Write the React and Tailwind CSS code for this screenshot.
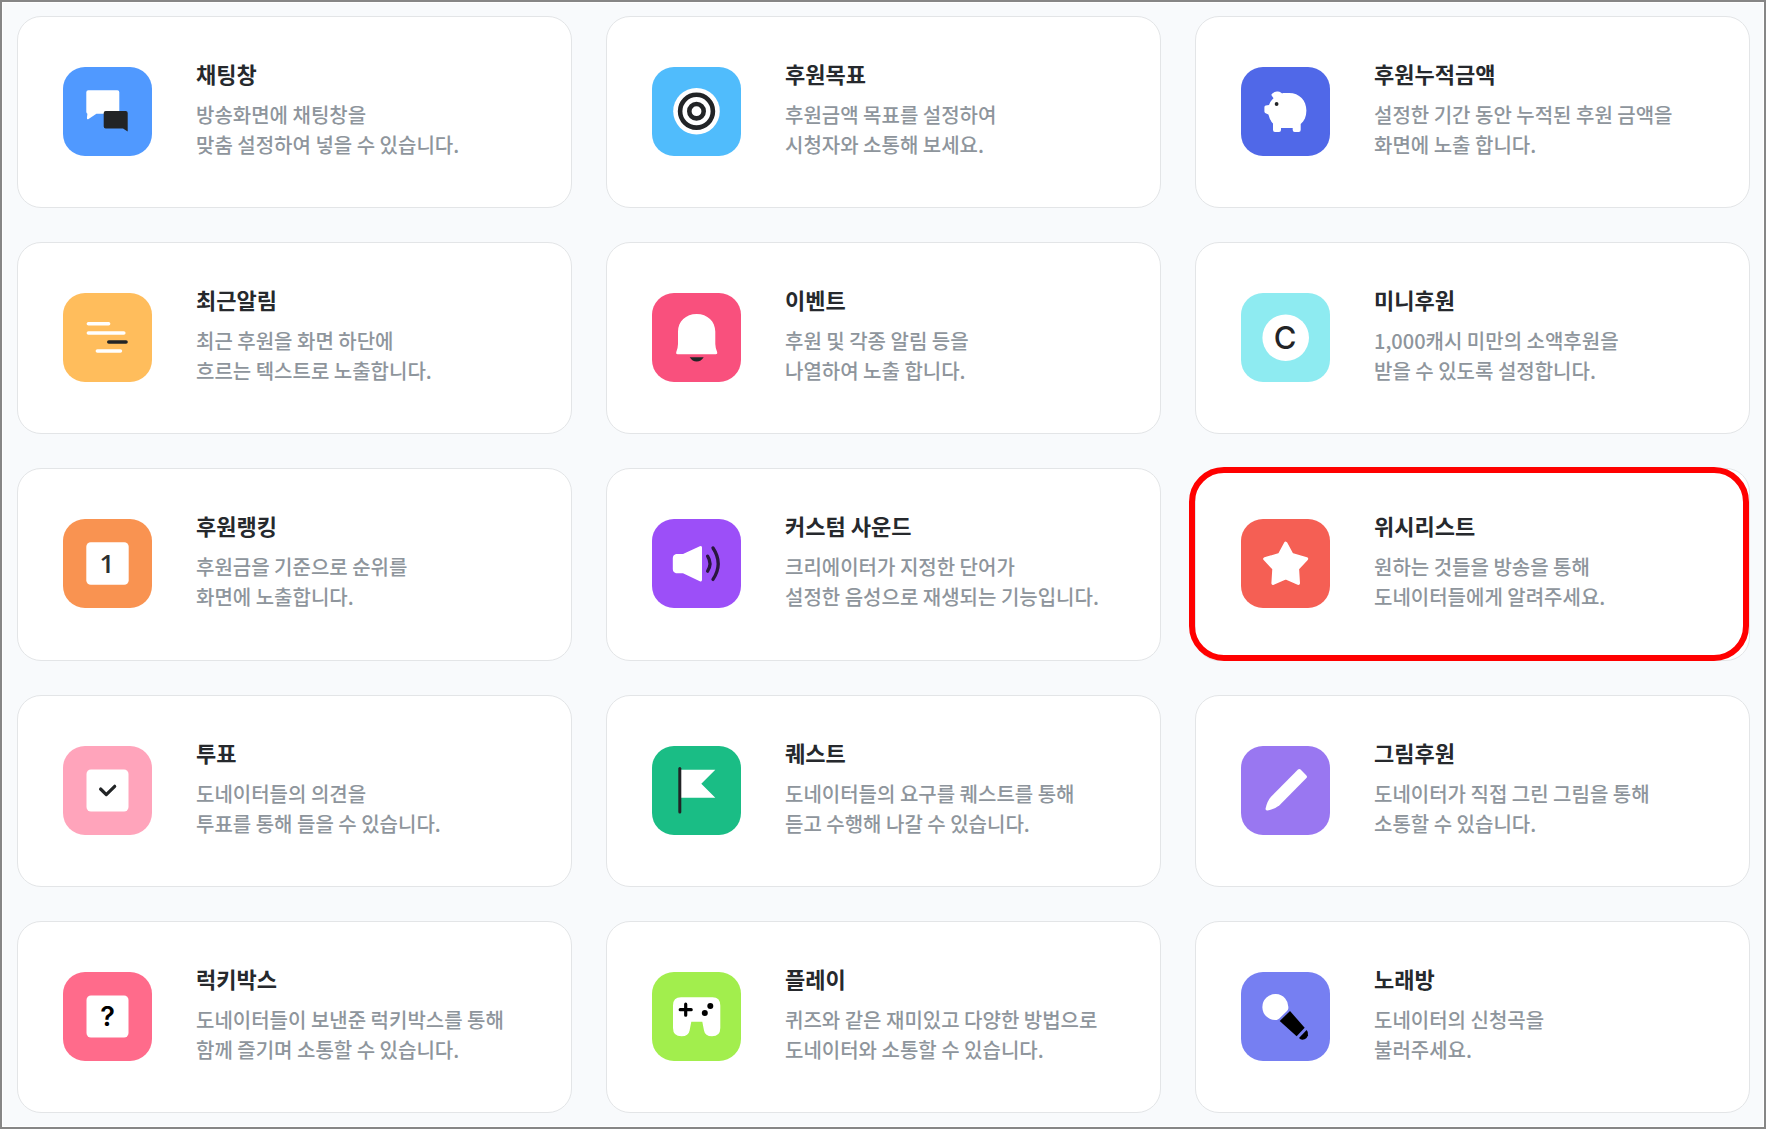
import React from 'react';

const ink = '#222426';

const ChatIcon = () => (
  <>
    <path d="M25.3 23.3H54.3Q56.3 23.3 56.3 25.3V46.7H33.4L25.2 52.2Q23.8 52.6 23.9 51L24.4 46.7Q23.3 46 23.3 44.7V25.3Q23.3 23.3 25.3 23.3Z" fill="#fff" />
    <path d="M42.7 44H62.7Q64.7 44 64.7 46V64.6L60 61.5H42.7Q40.7 61.5 40.7 59.5V46Q40.7 44 42.7 44Z" fill={ink} />
  </>
);

const TargetIcon = () => (
  <>
    <circle cx="44.5" cy="44.2" r="23.3" fill="#fff" />
    <circle cx="44.5" cy="44.2" r="16.4" fill="none" stroke={ink} strokeWidth="4.6" />
    <circle cx="44.5" cy="44.2" r="7.2" fill="none" stroke={ink} strokeWidth="4.6" />
  </>
);

const PiggyIcon = () => (
  <>
    <g fill="#fff">
      <path d="M42 26H48C58.5 26 65.4 33.5 65.4 43.5C65.4 49.5 63.3 54 59.7 57V63Q59.7 65 57.7 65H53.7Q51.7 65 51.7 63V61H40V63Q40 65 38 65H34Q32 65 32 63V56.5Q28.6 53 27.4 47.5L24.6 46.2Q23.4 45.6 23.4 44.4V40.2Q23.4 38.8 24.8 38.5L28 38Q29 34.5 32.5 31.3Z" />
      <path d="M30.6 28.4Q30 27.2 31.4 26.6Q33.8 24.2 36.8 24.6Q40.5 25 41.5 27.5L33.5 32.5Z" />
    </g>
    <circle cx="35.6" cy="37" r="1.9" fill={ink} />
  </>
);

const TickerIcon = () => (
  <g strokeWidth="3.6" strokeLinecap="round" stroke="#fff">
    <path d="M25.4 30.7H45.6M25.4 40H60.8M34.4 58H57.4" />
    <path d="M45.8 49H63" stroke={ink} />
  </g>
);

const BellIcon = () => (
  <>
    <path d="M44.7 21C55.5 21 63.3 28.5 63.3 38.5V51Q63.3 54.5 65.2 59.2Q65.8 61.3 63.8 61.3H25.6Q23.6 61.3 24.2 59.2Q26 54.5 26 51V38.5C26 28.5 33.8 21 44.7 21Z" fill="#fff" />
    <path d="M37.7 64.2H51.7Q49.2 68.4 44.7 68.4Q40.2 68.4 37.7 64.2Z" fill={ink} />
  </>
);

const CoinIcon = () => (
  <>
    <circle cx="44.7" cy="44.7" r="23.3" fill="#fff" />
    <text x="44" y="55.8" textAnchor="middle" className="font-['Inter'] text-[31px] font-medium" fill={ink}>C</text>
  </>
);

const RankIcon = () => (
  <>
    <rect x="23.3" y="23.3" width="42.4" height="42.4" rx="4.5" fill="#fff" />
    <text x="44" y="54" textAnchor="middle" className="font-['Open_Sans'] text-[26px] font-semibold" fill="#2c2f30">1</text>
  </>
);

const SoundIcon = () => (
  <>
    <path d="M24 35H31L47.8 27.2Q50 26.2 50 28.5V60.8Q50 63.2 47.8 62.2L31 54.3H24Q20.8 53.2 20.8 50V39.2Q20.8 36 24 35Z" fill="#fff" />
    <path d="M55.6 37.2Q60.4 44.7 55.6 52.2M61 29Q71.4 44.7 61 60.4" fill="none" stroke="#2a1740" strokeWidth="3.3" strokeLinecap="round" />
  </>
);

const StarIcon = () => (
  <path
    d="M44.7 24.4L50.9 35.7L65.5 39.9L56.4 49.6L57.3 64.2L44.7 58.6L32.1 64.2L33 49.6L23.9 39.9L38.5 35.7Z"
    fill="#fff"
    stroke="#fff"
    strokeWidth="3.4"
    strokeLinejoin="round"
  />
);

const VoteIcon = () => (
  <>
    <rect x="23.5" y="23.5" width="42" height="42" rx="4.5" fill="#fff" />
    <path d="M37.6 43L43.3 48.6L51.7 40.3" fill="none" stroke={ink} strokeWidth="3.2" strokeLinecap="round" strokeLinejoin="round" />
  </>
);

const FlagIcon = () => (
  <>
    <path d="M29 23.7H63.3L49.3 37.7L63.3 51.7H29Z" fill="#fff" />
    <path d="M27.8 22.6V66" stroke={ink} strokeWidth="3" strokeLinecap="round" />
  </>
);

const PencilIcon = () => (
  <path d="M57 23.6Q58.3 22.4 59.6 23.6L65.4 29.4Q66.6 30.7 65.4 32L38.5 59.2Q34.5 62.8 26.5 64.5Q24.2 64.8 24.6 62.4Q26.2 55 30 50.8Z" fill="#fff" />
);

const LuckyBoxIcon = () => (
  <>
    <rect x="23.5" y="23.5" width="42" height="42" rx="4.5" fill="#fff" />
    <text x="44.5" y="54.3" textAnchor="middle" className="font-['Inter'] text-[27px] font-semibold" fill="#000">?</text>
  </>
);

const GamepadIcon = () => (
  <>
    <path d="M29 25.3H60.5Q68.3 25.3 68.3 33.5V56Q68.3 64.3 60 64.3Q53 64.3 52 58.5L50.3 49.7H39.3L37.6 58.5Q36.6 64.3 29.5 64.3Q21 64.3 21 56V33.5Q21 25.3 29 25.3Z" fill="#fff" />
    <path d="M28.2 37.7H39.2M33.7 32.2V43.2" stroke="#000" strokeWidth="3.2" strokeLinecap="round" />
    <circle cx="58.3" cy="34" r="3" />
    <circle cx="52.8" cy="41.1" r="3" />
  </>
);

const MicIcon = () => (
  <>
    <path d="M47.3 36.4A13 13 0 1 0 35.6 48Q37.4 47.4 38.6 46.2L46 39Q47 38 47.3 36.4Z" fill="#fff" />
    <path d="M49 39L63.7 55.8L55.6 64.3L38.7 49Z" />
    <path d="M65.6 58L58 66Q60.2 68.6 63.6 67.2Q66 66 67 63.4Q67.6 60 65.6 58Z" />
  </>
);

const widgets = [
  { title: '채팅창', lines: ['방송화면에 채팅창을', '맞춤 설정하여 넣을 수 있습니다.'], color: 'bg-[#5099ff]', Icon: ChatIcon },
  { title: '후원목표', lines: ['후원금액 목표를 설정하여', '시청자와 소통해 보세요.'], color: 'bg-[#50bcfc]', Icon: TargetIcon },
  { title: '후원누적금액', lines: ['설정한 기간 동안 누적된 후원 금액을', '화면에 노출 합니다.'], color: 'bg-[#5068e8]', Icon: PiggyIcon },
  { title: '최근알림', lines: ['최근 후원을 화면 하단에', '흐르는 텍스트로 노출합니다.'], color: 'bg-[#ffbd5c]', Icon: TickerIcon },
  { title: '이벤트', lines: ['후원 및 각종 알림 등을', '나열하여 노출 합니다.'], color: 'bg-[#f9507d]', Icon: BellIcon },
  { title: '미니후원', lines: ['1,000캐시 미만의 소액후원을', '받을 수 있도록 설정합니다.'], color: 'bg-[#8eebf1]', Icon: CoinIcon },
  { title: '후원랭킹', lines: ['후원금을 기준으로 순위를', '화면에 노출합니다.'], color: 'bg-[#f99351]', Icon: RankIcon },
  { title: '커스텀 사운드', lines: ['크리에이터가 지정한 단어가', '설정한 음성으로 재생되는 기능입니다.'], color: 'bg-[#9c4ff8]', Icon: SoundIcon },
  { title: '위시리스트', lines: ['원하는 것들을 방송을 통해', '도네이터들에게 알려주세요.'], color: 'bg-[#f55f54]', Icon: StarIcon, highlighted: true },
  { title: '투표', lines: ['도네이터들의 의견을', '투표를 통해 들을 수 있습니다.'], color: 'bg-[#ffa4bb]', Icon: VoteIcon },
  { title: '퀘스트', lines: ['도네이터들의 요구를 퀘스트를 통해', '듣고 수행해 나갈 수 있습니다.'], color: 'bg-[#1abd85]', Icon: FlagIcon },
  { title: '그림후원', lines: ['도네이터가 직접 그린 그림을 통해', '소통할 수 있습니다.'], color: 'bg-[#9977f1]', Icon: PencilIcon },
  { title: '럭키박스', lines: ['도네이터들이 보낸준 럭키박스를 통해', '함께 즐기며 소통할 수 있습니다.'], color: 'bg-[#ff6b8b]', Icon: LuckyBoxIcon },
  { title: '플레이', lines: ['퀴즈와 같은 재미있고 다양한 방법으로', '도네이터와 소통할 수 있습니다.'], color: 'bg-[#a2ee4d]', Icon: GamepadIcon },
  { title: '노래방', lines: ['도네이터의 신청곡을', '불러주세요.'], color: 'bg-[#767ff2]', Icon: MicIcon },
];

function WidgetCard({ title, lines, color, Icon, highlighted }) {
  return (
    <a href="#" className="relative flex items-start gap-11 rounded-3xl border border-[#e3e5e7] bg-white px-[45px] pt-[50px] pb-10">
      <div className={`size-[89px] shrink-0 overflow-hidden rounded-[22px] ${color}`}>
        <svg viewBox="0 0 89 89" className="size-full" aria-hidden="true">
          <Icon />
        </svg>
      </div>
      <div className="-mt-2.5">
        <h3 className="mb-[11px] text-[22px] leading-8 font-bold text-[#26292d]">{title}</h3>
        <p className="text-[20px] leading-[30px] font-medium text-[#8e959c]">
          {lines[0]}
          <br />
          {lines[1]}
        </p>
      </div>
      {highlighted && (
        <span className="pointer-events-none absolute -top-0.5 right-0 -bottom-px -left-[7px] rounded-[35px] border-6 border-[#ff0000]" />
      )}
    </a>
  );
}

export default function App() {
  return (
    <main className="flex min-h-screen flex-col border-2 border-[#868686] bg-[#f8fafc] pt-[14px] pr-[14px] pb-[14px] pl-[15px] font-['Noto_Sans_CJK_KR',sans-serif] shadow-[inset_0_0_0_1px_#ffffff]">
      <div className="grid flex-1 auto-rows-fr grid-cols-1 gap-[34px] md:grid-cols-2 xl:grid-cols-3">
        {widgets.map((widget) => (
          <WidgetCard key={widget.title} {...widget} />
        ))}
      </div>
    </main>
  );
}
